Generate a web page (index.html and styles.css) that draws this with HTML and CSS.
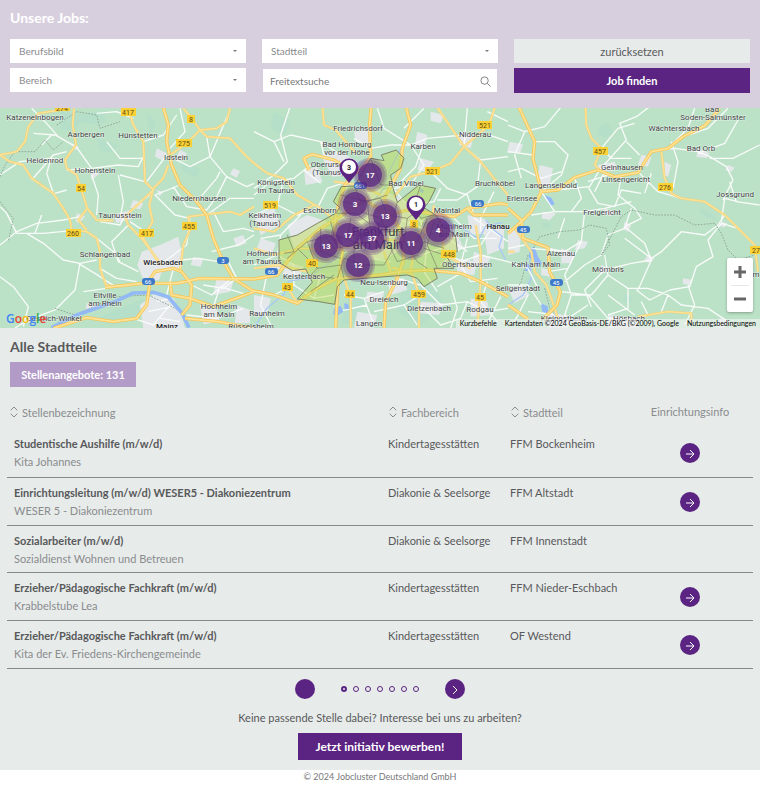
FILE: index.html
```
<!DOCTYPE html>
<html lang="de">
<head>
	<title>Unsere Jobs</title>
	<meta charset="utf-8">
	<meta name="viewport" content="width=device-width, initial-scale=1">
	<link rel="stylesheet" href="styles.css">
</head>
<body>
	<form class="search">
		<h1>Unsere Jobs:</h1>
		<div class="fields">
			<div class="field select">
				<select aria-label="Berufsbild"><option>Berufsbild</option></select>
			</div>
			<div class="field select">
				<select aria-label="Stadtteil"><option>Stadtteil</option></select>
			</div>
			<button class="btn reset" type="reset">zurücksetzen</button>
			<div class="field select">
				<select aria-label="Bereich"><option>Bereich</option></select>
			</div>
			<div class="field text">
				<input type="text" aria-label="Freitextsuche" placeholder="Freitextsuche">
				<svg class="lens" viewBox="0 0 12 12"><circle cx="5" cy="5" r="4"/><path d="M8 8l3.500 3.500"/></svg>
			</div>
			<button class="btn find" type="button">Job finden</button>
		</div>
	</form>

	<div class="map">
		<svg class="mapImg" viewBox="0 0 760 220" preserveAspectRatio="xMidYMid slice">
			<!-- west -->
			<g transform="translate(0 -3) scale(.33333)">
				<path class="wood" d="M180 20l60 8 70-10 10 30-30 12-50-10-20 30-40-8zM290 100l70 20-30 25-30-10zM440 20l30 40-20 30zM540 170l60 20-10 30-40-20zM380 600l60-20-20 60-80 20-60-15z"/>
				<path class="town" d="M425 440l55-20 55-25 12 60-10 45-50-5-10 30-45 5-20-50zM420 600l50-40 50 20 25 50 10 40H430zM340 330l50-15 10 25-50 15zM400 285l30 10-10 18-30-5zM270 190l30 15-25 20zM470 130l30 15-15 20-20-10zM215 115l20 10-10 12zM540 135l20 10-10 20-22-5zM700 190l20 8-10 20-20-10zM700 400l30-10 10 25-30 10zM650 520l50 10-10 30-50 10zM580 455l30 8-8 22-30-5zM600 600l50 10 10 40-50 8zM710 600l40 15v40h-45zM230 325l25 8-15 22-12-5zM470 255l20 5-12 15zM260 595l30 4-8 20-25-5zM545 350l20 8-15 15z"/>
				<path class="minor" d="M95 10l40 40 40 45 60 35M100 85l65 5 55 30M0 210l60-40 90-10 40 5M95 225l65-75 40-10M160 265l-20-60 15-50M0 420l50-40 60-25 80-10 50-10M50 385l-30-60-20-20M50 385l80 0 85-8M0 515l40 30 45 60-15 60M80 385l50 30 60 50 50 10 50-10M240 475l-15 80-60 60-80 30-40 24M250 560l70-10M225 120l50 70 80-10 60 5 15-30M270 190l-70 5M275 210l20 60-5 60M355 210l15 80-10 50M300 350l60 10 10-20 50-50 30-20M430 110l60-20 40-60M400 40l-50-20-60 5M435 160l-75 0-40-50M435 230l-75-20M500 150l-60 80M510 155l60 30 60-30 60-140M540 10l15 70-45 50M620 95l10 60 50 60 60 30 22-10M680 215l-30 60-30 40-60-10-40-60M590 290l60-70 10-20M620 330l70-50 72 0M640 320l30 60 60-10 32 10M635 440l80-20 47-30M680 460l30 60-40 30-60-10M545 465l50-5 60 10M540 240l-75 30 60 60 45 10M385 360l-50 50 20 60 60 30M290 400l50 40 20 30M300 490l50 30 60 10M345 545l-60-40-50-30M390 350l60 40M480 480l80-60 10-80M575 540l60 30 60-50M640 605l20-60 70 20M560 630l90 10 80-30M400 640l60 20M520 490l-20 80 40 50M470 590l40-10M445 620l70-15M460 660l50-60M480 640l60 10M125 330l-20 55M200 255l-35 10M155 90l-30 30"/>
				<path class="border" d="M0 215l15-35 30-40 60 0 30-35 25 30 30-25M170 60l60-40 60 10 10 40 60-20M0 290l40 50-15 70M165 610l60 20 120-55 100-5 90 45"/>
				<path class="river" d="M155 668l75-38 110-38 60-28 60-2 45 14 42 50 20 42"/>
				<path class="roadEdge" d="M-5 150l30-5 25-5 25-30 10-45 30-40 85-13M0 150l30 20 40 10 25 40 65 45 30 45 20 35 5 30 45 5 30 20 10 40v50l18 50 25 5M222 10l-4 50 10 60-23 30-10 15 5 25 30 20 13 40 19 60 28 35 50 2M262 310l-27 35 25 30M385 10l15 50 30 50 5 120 25 25-85 80 10 25 40 40 45 60 15 20M505 180l-15 40-30 30-12 50 10 50-18 30-10 20 50 80M550 10l25 30 25 35-40 40-50 35M600 75l50-5 30-20 10-40M600 75l20 20 70 5 45 50 27 25M762 305l-42 25-30-10-125 15 5 40-20 45-10 80"/>
				<path class="road" d="M-5 150l30-5 25-5 25-30 10-45 30-40 85-13M0 150l30 20 40 10 25 40 65 45 30 45 20 35 5 30 45 5 30 20 10 40v50l18 50 25 5M222 10l-4 50 10 60-23 30-10 15 5 25 30 20 13 40 19 60 28 35 50 2M262 310l-27 35 25 30M385 10l15 50 30 50 5 120 25 25-85 80 10 25 40 40 45 60 15 20M505 180l-15 40-30 30-12 50 10 50-18 30-10 20 50 80M550 10l25 30 25 35-40 40-50 35M600 75l50-5 30-20 10-40M600 75l20 20 70 5 45 50 27 25M762 305l-42 25-30-10-125 15 5 40-20 45-10 80"/>
				<path class="motorwayEdge" d="M488 0l17 60-5 50 15 70 25 60 50 50 30 40 20 70 25 60 35 60 62 40M315 547l115-12 100 0 70-15 162 2M450 530l-10 70-30 40-70 10-80-12-100 32M445 530l20-30 55-10 25 10 30 40-5 60-25 30M510 530l5 40 55 10 70 25 122-45M555 640l100 10 107 20"/>
				<path class="motorway" d="M488 0l17 60-5 50 15 70 25 60 50 50 30 40 20 70 25 60 35 60 62 40M315 547l115-12 100 0 70-15 162 2M450 530l-10 70-30 40-70 10-80-12-100 32M445 530l20-30 55-10 25 10 30 40-5 60-25 30M510 530l5 40 55 10 70 25 122-45M555 640l100 10 107 20"/>
			</g>
			<!-- centre -->
			<g transform="translate(254 -3) scale(.33333)">
				<path class="wood" d="M60 20l50 30-20 40-40-20zM280 570l60 10-30 70-50 10zM450 520l100 30 20 60-70 50-70-40zM180 470l220-10-10 40-200 0z"/>
				<path class="town" d="M200 150l60-10 50 30-15 40-60 5zM270 280l80-40 90 40 60 50-40 90-60 40-100 10-60-70zM150 195l40-10 15 45-50 10zM0 330l60-20 20 50-60 30zM100 360l60-30 60 20-20 60-80 20zM620 80l40 10-10 40-35-10zM490 80l30 10-8 40-30-5zM500 160l40 10-20 30-30-5zM640 330l60 15 10 40-60 5zM690 380l60-20v70l-50 20zM610 460l60 10-10 40-50-5zM400 530l50-10 10 35-50 15zM340 560l50 5-10 30-45-5zM500 590l70 5-15 35-60-5zM650 580l50 10 10 40-60 5zM310 620l60 10-10 38h-60zM100 470l50 15-15 30-50-5zM20 400l45 15-10 30-50-5zM560 400l50-10 20 40-60 15zM300 80l50-5-5 40-40-5zM40 480l40 5-10 25-35-3zM660 440l50 20-20 30-35-10zM0 570l50 10-10 50-40 5zM530 20l40 10-10 25-30-8z"/>
				<path class="minor" d="M0 80l60 30 50-20 90 20 60 40M110 0l-30 90 20 80-40 40-60 40M60 110l30 60M200 110l10 40M300 100l50 30 60-10 60 0 50-20 110-10M370 10l20 60 80 50 40 60-40 60-90 20M450 70l60-60M505 125l-20 60-60 60M530 200l50 50 60 20 20 60M630 125l50 40-10 80-60 40-60 0M680 165l82-10M640 10l-10 115M700 20l62 30M705 90l57 20M0 270l50-40 70-10 50-40M90 220l-20 80-70 30M70 300l60 30 60-20 30-60 60-20M150 195l50 40M20 400l60-10 60-60M80 390l-10 60-70 30M70 450l50 30 0 60-60 30-60-10M40 500l-20 100 30 60M120 540l60 40 60-10M280 240l-20 60 40 60 70-30M200 370l50 60 80 10M180 420l60 50M250 300l90 50 90-20M330 240l30 60 20 60-40 60M410 240l40 50 50 60 60-10M430 340l100 40 60-20M480 300l60-10 20-40M440 420l60 30 60-20 60 40 60-20 82 20M500 350l20 70-10 80 40 60M560 480l60-50 60-10 40-60M640 400l-20 80 30 50 80-10M430 520l70 20 60 60 80-10 60 30 62-10M390 560l-60 20-60-10M330 580l30 80M340 600l-90 20M360 620l90-20 50-30M450 600l40 60M500 600l60 60 60-20 20-50M590 540l20 70-20 60M700 530l-20 60 50 60M620 505l-70 40M740 575l-40 80M560 330l20 70 60 40M600 340l60 60 70 0M660 340l102 70M720 260l-40 80 0 40M290 510l60-50 60 10M200 510l-20 70"/>
				<path class="water" d="M240 610l20-8 8 18-20 14-10-6zM270 595l12 2 4 14-14 2zM500 250l10 4-3 10-12-4z"/>
				<path class="stream" d="M0 668l40-60 50-40 15-40 60-10 40-30 60-40 80-15 60-30 90-10 50-40 70 10 60 40 20-40 50-10M695 345l25 30 25 20-10 30 20 40M440 130l-30 60-20 60-50 60M320 170l-40 20"/>
				<path class="roadEdge" d="M0 175l40 30 50 15 40 50 70 40 60 50M205 0l5 60 35 15 60 70M545 0l85 125-40 50-60 25-60 15-50 60M725 0l-20 60-75 65 50 45 40 50 42 50M665 360l15 80 0 90-10 140M0 430l60 20 80-20 100 5 130-35 90 10 80-60M100 545l30 50M290 668l0-90-20-60M495 668l0-100-20-60-60-20M540 300l-10 60-50 70-10 70M560 340l10 110 80 40M390 440l20 60 20 20M0 370l60 10 60-50 60-30M380 270l-60-30-80-10M180 440l-20 60-90-20-70 10"/>
				<path class="road" d="M0 175l40 30 50 15 40 50 70 40 60 50M205 0l5 60 35 15 60 70M545 0l85 125-40 50-60 25-60 15-50 60M725 0l-20 60-75 65 50 45 40 50 42 50M665 360l15 80 0 90-10 140M0 430l60 20 80-20 100 5 130-35 90 10 80-60M100 545l30 50M290 668l0-90-20-60M495 668l0-100-20-60-60-20M540 300l-10 60-50 70-10 70M560 340l10 110 80 40M390 440l20 60 20 20M0 370l60 10 60-50 60-30M380 270l-60-30-80-10M180 440l-20 60-90-20-70 10"/>
				<path class="motorwayEdge" d="M352 0l-5 60 3 95-20 30-40 30-20 30-25 85-5 70 25 40-15 120-5 110M0 558l60 12 70 25 50-40 70-35 130-10 60-10 80-5 100 10 60 25 82 45M0 522l70-12 60-80 70-60 50-30 90-60M455 0l15 60-25 70-5 60-50 90 50 100 10 80-20 60-35 70-5 80M340 290l60 40 60-15 100 15 40 5 40-25 100-15 22 5M165 195l-15-35 25-12 65 17 50 30M640 310l20 20 102 0"/>
				<path class="motorway" d="M352 0l-5 60 3 95-20 30-40 30-20 30-25 85-5 70 25 40-15 120-5 110M0 558l60 12 70 25 50-40 70-35 130-10 60-10 80-5 100 10 60 25 82 45M0 522l70-12 60-80 70-60 50-30 90-60M455 0l15 60-25 70-5 60-50 90 50 100 10 80-20 60-35 70-5 80M340 290l60 40 60-15 100 15 40 5 40-25 100-15 22 5M165 195l-15-35 25-12 65 17 50 30M640 310l20 20 102 0"/>
				<path class="district" d="M75 405l55-15 60-35 55-30 12-18-19-17 24-45 40-2 48-83 40 7-8-17 45-15 23 25-10 30-30 20 5 32 15 50 65-52 50 10-20 40-15 18 35 22 15 20 45 45 5 45-35 10 25 40-60 0 10 30-40 25-20-25-30-10-190 15-20 20-8 53-47-8-65-8 45-50-20-40-40 5-40-25z"/>
				<path class="quarter" d="M100 460l60-50 80-20-10-40M160 410l30 80 70-10 10 40M240 390l60 20 50-30-10-90 60-20M245 325l60 0 40 30M300 240l20 50 60-10 20 50 60 10 40-30M340 290l-80-20M350 160l30 80 35 0M300 410l0 70 90 0 40-70 60 0 30-70M350 380l50 30 30 60 60-20 20-40 60 20M400 330l-50 50M430 290l-10 40M500 240l-20 60 20 40 40-10M460 340l-10 70 40 60 30 20M540 350l-20 70 30 70M510 430l60 20M250 520l20-60 60 20M200 370l0 70 60 20M130 430l60 60-20 20 70 10M170 560l70-50M290 340l-10 60M100 390l20 50-30 5M220 400l20 30 60-10M320 320l60 20 20 40 60 0M265 290l50 10 30-15"/>
			</g>
			<!-- east -->
			<g transform="translate(508 -3) scale(.33333)">
				<path class="wood" d="M270 65l30-10 15 25-20 20-25-10zM100 350l30 5-5 15-20-3zM580 310l30 15 20 20-30-5-25-20zM350 570l25 5-10 20-20-5zM30 270l30 10-20 20zM60 510l25 20-15 15-20-15z"/>
				<path class="town" d="M95 180l40 10-10 50-40 5zM270 180l50-10 10 25-60 5zM400 150l30 5-10 30-30-5zM470 170l20 10-10 35-12-5zM570 130l35 15-10 15-30-5zM0 370l40 0-5 70-35 10zM105 320l40 5-20 20-25-5zM210 405l30 5-10 20-30 5zM350 350l20 10-10 20-15-8zM420 450l20 10-15 15-18-8zM0 550l40-10 25 30-45 25zM160 430l40 15-10 30-30 0zM100 490l30 5-5 20-25-5zM280 480l25 10-15 15-18-5zM635 640l25 8-10 20h-25zM660 180l20 8-10 12-18-5zM525 520l30 5-10 15-20-3zM120 620l70 15-10 33H120zM300 630l90 10v28h-90zM640 350l18 5-8 12-18-4zM290 310l30 10-12 12-25-5zM5 110l40 8-8 25-40 0z"/>
				<path class="water" d="M68 430l12-5 10 30 12 20-14 12-15-22-12-8zM98 595l20 8 5 25-20-8zM110 270l20 8 10 20-15 5zM48 480l15-4 5 20-15 3z"/>
				<path class="stream" d="M0 600l45-30 25-50-5-60"/>
				<path class="minor" d="M0 60l50 20 60-15 50-60M80 110l60 0 40 40-20 60-60 50M0 140l75 10M0 200l40-10 60 30 60-20M50 80l-30 70 20 70M100 260l40 60 90 0 60-10 80-20M140 320l-70 10M145 255l100-10 30-50M200 220l20 60-30 40M240 245l30 50 50 10 20-50 60 10M340 210l-10 60 50 40 20 30-50 25M290 200l-30 60M275 195l80-90-20-50 50-20 40-30M280 130l50-60 50-15M250 100l60 60 60 0M390 200l60 60 70 20M430 140l70-10 70 10 35 15 50 30 20 40-30 60M490 110l20 60-15 80M480 130l60-60 20-60M540 90l60-20 60-60M570 145l80-30 40-70M605 160l70 0 80-40M665 230l20 60 70 10M650 330l-20 30-40 30-70-10-60 60-30 20-80-60M690 370l-50-15-40 50 15 50-50 30-20 60-60 10-60 30-40-30M690 290l-40-10-10 70M370 310l-20 60-50 20-20 60-50 30-60 50M350 365l60 50 20 50-60 10-80 20-60 60 20 50M290 450l10 60-50 60M300 510l60 40 0 60-60 20M360 550l60 0 60 20 40 30 80 10 60 40M430 465l-40 90M230 320l-10 90-50 30-100-10M220 410l-50 100 20 60 60 0M150 400l20-60M120 430l50 10M180 490l-60 10M160 560l80 10 60 70 90 0M190 570l-20 60 60 30M240 600l-60 40M300 570l80 60M400 590l20 40-60 30M480 570l-20 50M540 540l20 60-30 60M0 470l60 20 30 60M0 540l60 0 40 60M60 570l-40 80M0 430l50-10M60 620l90 10M240 230l60-20M355 110l40 40M410 265l20-60"/>
				<path class="border" d="M75 430l20-35 60-15 60-5 30-15 50 10 10 50-25 30 60-115 30-20 70 15 60 0 60 30 60-5 20 30 20 50 30 30 50-15M60 450l-20 80-20 30M110 550l15 60 40 50"/>
				<path class="roadEdge" d="M232 0l3 60 15 40 30 30-20 50 15 15M460 140l10 80 20 45 30 15 70 10 60 40 40 40 50 50 10 80M20 370l50 70 10 60 35 40 15 40 20 60M390 635l90-15 70 5 0 30M0 440l20 0"/>
				<path class="road" d="M232 0l3 60 15 40 30 30-20 50 15 15M460 140l10 80 20 45 30 15 70 10 60 40 40 40 50 50 10 80M20 370l50 70 10 60 35 40 15 40 20 60M390 635l90-15 70 5 0 30M0 440l20 0"/>
				<path class="motorwayEdge" d="M30 0l50 110-5 50 25 100-30 60-30 30-40 35M100 260l50-5 50-38 70-22 50 20 70-12 40-63 50-10 50-38 60-30 45-50M0 310l40 35 5 55 75 28 5 72 32 60-10 40-40 40M0 600l60 42"/>
				<path class="motorway" d="M30 0l50 110-5 50 25 100-30 60-30 30-40 35M100 260l50-5 50-38 70-22 50 20 70-12 40-63 50-10 50-38 60-30 45-50M0 310l40 35 5 55 75 28 5 72 32 60-10 40-40 40M0 600l60 42"/>
			</g>

			<g class="shields">
				<rect x="55" y="-3" width="15" height="6"/><text x="62" y="3">274</text>
				<rect x="121" y="0" width="15" height="8"/><text x="128" y="7">417</text>
				<rect x="187" y="7" width="8" height="8"/><text x="191" y="14">8</text>
				<rect x="176" y="31" width="16" height="8"/><text x="184" y="38">275</text>
				<rect x="76" y="76" width="10" height="8"/><text x="81" y="83">54</text>
				<rect x="66" y="121" width="15" height="8"/><text x="73" y="128">260</text>
				<rect x="139" y="121" width="15" height="8"/><text x="147" y="128">417</text>
				<rect x="182" y="114" width="15" height="8"/><text x="189" y="121">455</text>
				<rect x="263" y="93" width="15" height="8"/><text x="270" y="100">519</text>
				<rect x="306" y="151" width="12" height="8"/><text x="312" y="158">40</text>
				<rect x="282" y="175" width="11" height="8"/><text x="287" y="182">43</text>
				<rect x="345" y="182" width="10" height="8"/><text x="350" y="189">44</text>
				<rect x="410" y="112" width="8" height="8"/><text x="414" y="119">8</text>
				<rect x="411" y="182" width="15" height="8"/><text x="419" y="189">459</text>
				<rect x="441" y="142" width="15" height="8"/><text x="449" y="149">448</text>
				<rect x="425" y="59" width="15" height="8"/><text x="432" y="66">521</text>
				<rect x="477" y="13" width="15" height="8"/><text x="485" y="20">521</text>
				<rect x="475" y="185" width="11" height="8"/><text x="480" y="192">45</text>
				<rect x="593" y="39" width="15" height="8"/><text x="600" y="46">457</text>
				<rect x="658" y="75" width="15" height="8"/><text x="665" y="82">276</text>
				<rect x="750" y="138" width="15" height="8"/><text x="758" y="145">276</text>
			</g>
			<g class="shields blue">
				<rect x="217" y="149" width="12" height="7" rx="3"/><text x="223" y="155">3</text>
				<rect x="142" y="170" width="13" height="7" rx="3"/><text x="148" y="176">66</text>
				<rect x="265" y="160" width="13" height="7" rx="3"/><text x="271" y="166">66</text>
				<rect x="354" y="74" width="13" height="7" rx="3"/><text x="360" y="80">661</text>
				<rect x="471" y="92" width="13" height="7" rx="3"/><text x="478" y="98">66</text>
				<rect x="517" y="118" width="13" height="7" rx="3"/><text x="523" y="124">45</text>
				<rect x="550" y="171" width="13" height="7" rx="3"/><text x="556" y="177">45</text>
			</g>

			<g class="places">
				<text x="35" y="12">Katzenelnbogen</text>
				<text x="86" y="29">Aarbergen</text>
				<text x="138" y="30">Hünstetten</text>
				<text x="45" y="55">Heidenrod</text>
				<text x="176" y="52">Idstein</text>
				<text x="95" y="65">Hohenstein</text>
				<text x="199" y="93">Niedernhausen</text>
				<text x="120" y="110">Taunusstein</text>
				<text x="105" y="149">Schlangenbad</text>
				<text x="105" y="190">Eltville</text>
				<text x="105" y="198">am Rhein</text>
				<text x="54" y="213">Oestrich-Winkel</text>
				<text x="219" y="201">Hochheim</text>
				<text x="219" y="209">am Main</text>
				<text x="267" y="208">Raunheim</text>
				<text x="251" y="221">Rüsselsheim</text>
				<text x="276" y="77">Königstein</text>
				<text x="276" y="85">im Taunus</text>
				<text x="265" y="110">Kelkheim</text>
				<text x="265" y="118">(Taunus)</text>
				<text x="262" y="148">Hofheim</text>
				<text x="262" y="156">am Taunus</text>
				<text x="320" y="105">Eschborn</text>
				<text x="304" y="171">Kelsterbach</text>
				<text x="358" y="23">Friedrichsdorf</text>
				<text x="347" y="39">Bad Homburg</text>
				<text x="347" y="47">vor der Höhe</text>
				<text x="328" y="59">Oberursel</text>
				<text x="328" y="67">(Taunus)</text>
				<text x="423" y="41">Karben</text>
				<text x="406" y="78">Bad Vilbel</text>
				<text x="475" y="29">Nidderau</text>
				<text x="495" y="78">Bruchköbel</text>
				<text x="447" y="105">Maintal</text>
				<text x="454" y="121">Mühlheim</text>
				<text x="454" y="129">am Main</text>
				<text x="467" y="159">Obertshausen</text>
				<text x="384" y="177">Neu-Isenburg</text>
				<text x="384" y="194">Dreieich</text>
				<text x="429" y="203">Dietzenbach</text>
				<text x="480" y="204">Rodgau</text>
				<text x="369" y="218">Langen</text>
				<text x="518" y="183">Seligenstadt</text>
				<text x="551" y="80">Langenselbold</text>
				<text x="522" y="93">Erlensee</text>
				<text x="622" y="62">Gelnhausen</text>
				<text x="626" y="74">Linsengericht</text>
				<text x="674" y="23">Wächtersbach</text>
				<text x="712" y="4">Bad</text>
				<text x="713" y="12">Soden-Salmünster</text>
				<text x="701" y="43">Bad Orb</text>
				<text x="735" y="89">Jossgrund</text>
				<text x="602" y="107">Freigericht</text>
				<text x="561" y="148">Alzenau</text>
				<text x="536" y="159">Kahl am Main</text>
				<text x="608" y="164">Mömbris</text>
				<text x="564" y="213">Kleinostheim</text>
				<text x="629" y="213">Hösbach</text>
				<text x="756" y="169">m</text>
			</g>
			<g class="places city">
				<text x="163" y="157">Wiesbaden</text>
				<text x="167" y="221">Mainz</text>
				<text x="498" y="121">Hanau</text>
			</g>
			<g class="places metro">
				<text x="378" y="128">Frankfurt</text>
				<text x="378" y="141">am Main</text>
			</g>

			<g class="clusters">
				<g transform="translate(370 67)"><circle r="17"/><circle r="15"/><circle r="12"/><text y="3">17</text></g>
				<g transform="translate(355 96)"><circle r="17"/><circle r="15"/><circle r="12"/><text y="3">3</text></g>
				<g transform="translate(385 108)"><circle r="17"/><circle r="15"/><circle r="12"/><text y="3">13</text></g>
				<g transform="translate(348 127)"><circle r="17"/><circle r="15"/><circle r="12"/><text y="3">17</text></g>
				<g transform="translate(372 130)"><circle r="17"/><circle r="15"/><circle r="12"/><text y="3">37</text></g>
				<g transform="translate(326 138)"><circle r="17"/><circle r="15"/><circle r="12"/><text y="3">13</text></g>
				<g transform="translate(358 157)"><circle r="17"/><circle r="15"/><circle r="12"/><text y="3">12</text></g>
				<g transform="translate(411 135)"><circle r="17"/><circle r="15"/><circle r="12"/><text y="3">11</text></g>
				<g transform="translate(438 122)"><circle r="17"/><circle r="15"/><circle r="12"/><text y="3">4</text></g>
			</g>
			<g class="pins">
				<g transform="translate(349 74)"><path d="M0 1L-8-9a9.500 9.500 0 1 1 16 0z"/><circle cy="-15" r="7"/><text y="-12">3</text></g>
				<g transform="translate(416 111)"><path d="M0 1L-8-9a9.500 9.500 0 1 1 16 0z"/><circle cy="-15" r="7"/><text y="-12">1</text></g>
			</g>
		</svg>
		<div class="google"><span class="b">G</span><span class="r">o</span><span class="y">o</span><span class="b">g</span><span class="g">l</span><span class="r">e</span></div>
		<div class="zoom">
			<button type="button" aria-label="Vergrößern"><svg viewBox="0 0 12 12"><path d="M0 6h12M6 0v12"/></svg></button>
			<button type="button" aria-label="Verkleinern"><svg viewBox="0 0 12 12"><path d="M0 6h12"/></svg></button>
		</div>
		<div class="credits">
			<a href="#">Kurzbefehle</a>
			<span>Kartendaten ©2024 GeoBasis-DE/BKG (©2009), Google</span>
			<a href="#">Nutzungsbedingungen</a>
		</div>
	</div>

	<main class="jobs">
		<h2>Alle Stadtteile</h2>
		<div class="count">Stellenangebote: 131</div>
		<table>
			<thead>
				<tr>
					<th class="colJob"><button type="button"><svg viewBox="0 0 8 12"><path d="M0 4l4-4 4 4M0 8l4 4 4-4"/></svg>Stellenbezeichnung</button></th>
					<th class="colArea"><button type="button"><svg viewBox="0 0 8 12"><path d="M0 4l4-4 4 4M0 8l4 4 4-4"/></svg>Fachbereich</button></th>
					<th class="colTown"><button type="button"><svg viewBox="0 0 8 12"><path d="M0 4l4-4 4 4M0 8l4 4 4-4"/></svg>Stadtteil</button></th>
					<th class="colInfo">Einrichtungsinfo</th>
				</tr>
			</thead>
			<tbody>
				<tr>
					<td><strong>Studentische Aushilfe (m/w/d)</strong><small>Kita Johannes</small></td>
					<td>Kindertagesstätten</td>
					<td>FFM Bockenheim</td>
					<td class="info"><a class="round" href="#" aria-label="Info"><svg viewBox="0 0 20 20"><path d="M6 11h8M10 7l4 4-4 4"/></svg></a></td>
				</tr>
				<tr>
					<td><strong>Einrichtungsleitung (m/w/d) WESER5 - Diakoniezentrum</strong><small>WESER 5 - Diakoniezentrum</small></td>
					<td>Diakonie &amp; Seelsorge</td>
					<td>FFM Altstadt</td>
					<td class="info"><a class="round" href="#" aria-label="Info"><svg viewBox="0 0 20 20"><path d="M6 11h8M10 7l4 4-4 4"/></svg></a></td>
				</tr>
				<tr>
					<td><strong>Sozialarbeiter (m/w/d)</strong><small>Sozialdienst Wohnen und Betreuen</small></td>
					<td>Diakonie &amp; Seelsorge</td>
					<td>FFM Innenstadt</td>
					<td></td>
				</tr>
				<tr>
					<td><strong>Erzieher/Pädagogische Fachkraft (m/w/d)</strong><small>Krabbelstube Lea</small></td>
					<td>Kindertagesstätten</td>
					<td>FFM Nieder-Eschbach</td>
					<td class="info"><a class="round" href="#" aria-label="Info"><svg viewBox="0 0 20 20"><path d="M6 11h8M10 7l4 4-4 4"/></svg></a></td>
				</tr>
				<tr>
					<td><strong>Erzieher/Pädagogische Fachkraft (m/w/d)</strong><small>Kita der Ev. Friedens-Kirchengemeinde</small></td>
					<td>Kindertagesstätten</td>
					<td>OF Westend</td>
					<td class="info"><a class="round" href="#" aria-label="Info"><svg viewBox="0 0 20 20"><path d="M6 11h8M10 7l4 4-4 4"/></svg></a></td>
				</tr>
			</tbody>
		</table>
		<div class="pager">
			<button class="round" type="button" aria-label="Zurück"></button>
			<div class="dots">
				<button class="dot active" type="button" aria-label="Seite 1"></button>
				<button class="dot" type="button" aria-label="Seite 2"></button>
				<button class="dot" type="button" aria-label="Seite 3"></button>
				<button class="dot" type="button" aria-label="Seite 4"></button>
				<button class="dot" type="button" aria-label="Seite 5"></button>
				<button class="dot" type="button" aria-label="Seite 6"></button>
				<button class="dot" type="button" aria-label="Seite 7"></button>
			</div>
			<button class="round" type="button" aria-label="Weiter"><svg viewBox="0 0 20 20"><path d="M8 7l4 4-4 4"/></svg></button>
		</div>
		<p>Keine passende Stelle dabei? Interesse bei uns zu arbeiten?</p>
		<button class="apply" type="button">Jetzt initiativ bewerben!</button>
	</main>
	<footer>© 2024 Jobcluster Deutschland GmbH</footer>
</body>
</html>
```

FILE: styles.css
```
* {
	box-sizing: border-box;
}
body {
	margin: 0 2px 0 0;
	background: #fff;
	color: #58595b;
	font-family: Lato, "Liberation Sans", sans-serif;
	font-size: 11px;
	line-height: 18px;
}
button, input, select {
	font-family: inherit;
	font-size: inherit;
	color: inherit;
	border: 0;
	border-radius: 0;
	margin: 0;
	padding: 0;
}
button {
	cursor: pointer;
}
svg path, svg circle {
	fill: none;
}

/* search */
.search {
	background: #d8cfde;
	padding: 9px 10px 15px;
}
.search h1 {
	margin: 0 0 12px;
	color: #fff;
	font-size: 14px;
	line-height: 18px;
}
.fields {
	display: grid;
	grid-template-columns: repeat(3, 1fr);
	grid-auto-rows: 25px;
	gap: 4px 16px;
}
.field {
	position: relative;
	display: flex;
	color: #8a8c8e;
	font-size: 10px;
}
.field select, .field input {
	width: 100%;
	height: 24px;
	background: #fff;
	appearance: none;
	padding: 0 9px;
	outline: 0;
}
.select::after {
	content: "";
	position: absolute;
	right: 9px;
	top: 11px;
	border: 2px solid transparent;
	border-top-color: #77797b;
}
.text {
	padding: 1px;
}
.field input {
	height: 23px;
	padding: 0 7px;
}
.field input::placeholder {
	color: #77797b;
}
.lens {
	position: absolute;
	right: 7px;
	top: 8px;
	width: 11px;
	height: 11px;
	stroke: #77797b;
}
.reset {
	height: 24px;
	background: #e7ebea;
}
.find {
	background: #5b2482;
	color: #fff;
	font-weight: bold;
}

/* map */
.map {
	position: relative;
	height: 220px;
	background: #bbe2c6;
	overflow: hidden;
}
.mapImg {
	display: block;
	width: 100%;
	height: 100%;
}
.map .wood {
	fill: #b0decb;
	fill-opacity: .6;
}
.map .town {
	fill: #e4e8ea;
}
.map .water {
	fill: #92b9f5;
}
.map .river {
	stroke: #92b9f5;
	stroke-width: 11;
	stroke-linejoin: round;
}
.map .stream {
	stroke: #a9c8f5;
	stroke-width: 4;
}
.map .minor {
	stroke: #f8fbf9;
	stroke-width: 4;
	stroke-linejoin: round;
}
.map .border {
	stroke: #8fa79a;
	stroke-width: 3;
	stroke-dasharray: 5 4;
}
.map .roadEdge {
	stroke: #f3cf72;
	stroke-width: 7;
	stroke-linejoin: round;
}
.map .road {
	stroke: #fde49a;
	stroke-width: 4;
	stroke-linejoin: round;
}
.map .motorwayEdge {
	stroke: #f6c659;
	stroke-width: 10;
	stroke-linejoin: round;
}
.map .motorway {
	stroke: #fee396;
	stroke-width: 5;
	stroke-linejoin: round;
}
.map .district {
	fill: #bcd94f;
	fill-opacity: .45;
	stroke: #7d8467;
	stroke-width: 3;
}
.map .quarter {
	stroke: #7d8467;
	stroke-opacity: .7;
	stroke-width: 3;
}
.mapImg text {
	font-family: Roboto, sans-serif;
	text-anchor: middle;
}
.shields rect {
	fill: #fbd136;
}
.shields text {
	fill: #5c4b12;
	font-size: 7px;
}
.shields.blue rect {
	fill: #3d79c9;
}
.shields.blue text {
	fill: #fff;
	font-size: 6px;
}
.places text {
	fill: #3c4043;
	stroke: #fff;
	stroke-width: 1px;
	stroke-opacity: .6;
	paint-order: stroke;
	font-size: 8px;
}
.city text {
	fill: #202124;
	font-weight: 500;
}
.metro text {
	font-size: 13px;
	stroke-opacity: 0;
}
.clusters circle {
	fill: #5b2482;
	fill-opacity: .25;
}
.clusters circle:nth-child(3) {
	fill-opacity: .75;
}
.clusters text {
	fill: #fff;
	font-size: 8px;
	font-weight: bold;
}
.pins path {
	fill: #5b2482;
}
.pins circle {
	fill: #fff;
}
.pins text {
	fill: #222;
	font-size: 7px;
	font-weight: bold;
}
.google {
	position: absolute;
	left: 6px;
	bottom: 0;
	font-family: "Open Sans", sans-serif;
	font-size: 12px;
	font-weight: 600;
}
.google .b { color: #4285f4; }
.google .r { color: #ea4335; }
.google .y { color: #fbbc05; }
.google .g { color: #34a853; }
.zoom {
	position: absolute;
	right: 7px;
	bottom: 16px;
	width: 26px;
	padding: 0 4px;
	background: #fff;
	border-radius: 2px;
	box-shadow: 0 1px 3px rgba(0, 0, 0, .3);
}
.zoom button {
	display: flex;
	align-items: center;
	justify-content: center;
	width: 18px;
	height: 27px;
	background: none;
}
.zoom button + button {
	border-top: 1px solid #e6e6e6;
}
.zoom svg {
	width: 12px;
	height: 12px;
	stroke: #666;
	stroke-width: 3;
}
.credits {
	position: absolute;
	right: 0;
	bottom: 0;
	display: flex;
	gap: 8px;
	padding: 0 4px;
	color: #000;
	font-size: 7px;
	line-height: 9px;
	background: rgba(245, 245, 245, .6);
}
.credits a {
	color: inherit;
	text-decoration: none;
}

/* jobs */
.jobs {
	background: #e7ebea;
	padding: 10px 7px;
	text-align: center;
}
.jobs h2 {
	margin: 0 3px 6px;
	font-size: 14px;
	line-height: 18px;
	text-align: left;
}
.count {
	width: 126px;
	margin: 0 3px 8px;
	background: #b39bc8;
	color: #fff;
	line-height: 25px;
	font-weight: bold;
}
table {
	width: 100%;
	border-collapse: collapse;
	table-layout: fixed;
	text-align: left;
}
th {
	height: 34px;
	padding: 0 8px;
	color: #8a8c8e;
	font-weight: normal;
}
th button {
	display: flex;
	align-items: center;
	gap: 4px;
	background: none;
}
th svg {
	width: 8px;
	height: 10px;
	overflow: visible;
	stroke: #77797b;
}
.colJob {
	padding: 0 3px;
}
.colArea {
	width: 122px;
}
.colTown {
	width: 124px;
}
.colInfo {
	width: 126px;
	text-align: center;
}
td {
	padding: 6px 7px 4px;
	border-bottom: 1px solid #858a88;
	vertical-align: top;
}
td strong, td small {
	display: block;
}
td small {
	font-size: 11px;
	color: #8a8c8e;
}
.info {
	height: 48px;
	padding: 14px 7px 0;
}
.round {
	display: block;
	width: 20px;
	height: 20px;
	border-radius: 50%;
	background: #5b2482;
}
.info .round {
	margin: 0 auto;
}
.round svg {
	display: block;
	stroke: #fff;
}
.pager {
	display: flex;
	align-items: center;
	justify-content: center;
	gap: 26px;
	margin: 10px 0;
}
.dots {
	display: flex;
	gap: 6px;
}
.dot {
	width: 6px;
	height: 6px;
	border: 1px solid #5b2482;
	border-radius: 50%;
	background: none;
}
.dot.active {
	border-width: 2px;
}
.jobs p {
	margin: 0 0 6px;
}
.apply {
	height: 27px;
	padding: 0 18px;
	background: #5b2482;
	color: #fff;
	font-size: 12px;
	font-weight: bold;
}
footer {
	color: #77797b;
	font-size: 9px;
	line-height: 14px;
	text-align: center;
}
```
